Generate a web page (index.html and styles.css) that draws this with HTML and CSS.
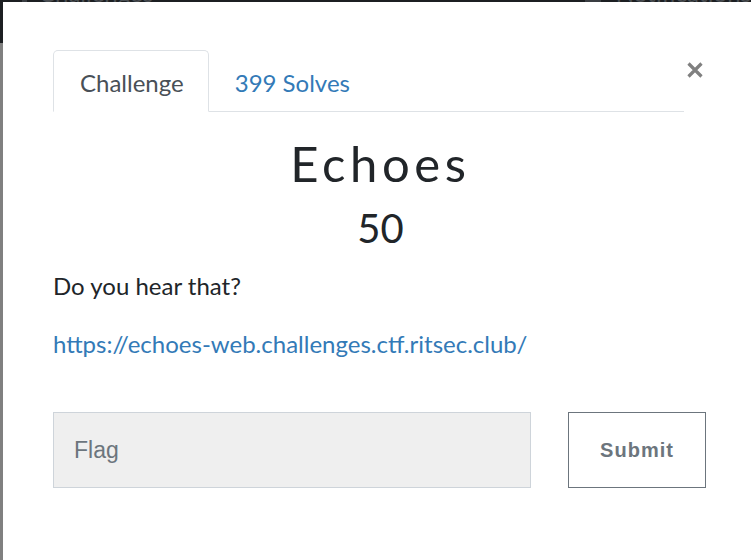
FILE: index.html
```html
<!DOCTYPE html>
<html lang="en">
<head>
<meta charset="utf-8">
<title>Echoes</title>
<link rel="stylesheet" href="styles.css">
</head>
<body>
<header class="backdrop-nav">
  <span class="bn-mark"></span>
  <span class="bn-item bn-left">Challenges</span>
  <span class="bn-icon"></span>
  <span class="bn-item">Notifications</span>
</header>
<div class="modal">
  <div class="modal-body">
    <div class="nav-row">
      <nav class="tabs">
        <a class="tab active">Challenge</a>
        <a class="tab">399 Solves</a>
      </nav>
      <button class="close" aria-label="Close">
        <svg width="16" height="16" viewBox="0 0 16 16"><path d="M1.5 1.5 L14.5 14.5 M14.5 1.5 L1.5 14.5" stroke="#808080" stroke-width="3.2" stroke-linecap="butt"/></svg>
      </button>
    </div>
    <h2 class="challenge-name">Echoes</h2>
    <h3 class="challenge-value">50</h3>
    <p class="desc">Do you hear that?</p>
    <p class="desc link-line"><a href="#">https://echoes-web.challenges.ctf.ritsec.club/</a></p>
    <form class="submit-row">
      <input class="flag-input" type="text" placeholder="Flag">
      <button class="submit-btn" type="button">Submit</button>
    </form>
  </div>
</div>
</body>
</html>
```
FILE: styles.css
```css
html, body {
  margin: 0;
  padding: 0;
}
body {
  background: #808080;
  width: 751px;
  height: 560px;
  overflow: hidden;
  font-family: "Lato", "Open Sans", sans-serif;
}
.backdrop-nav {
  height: 43px;
  background: #1c1f22;
  display: flex;
  align-items: flex-start;
  overflow: hidden;
}
.bn-mark {
  width: 5px;
  height: 14px;
  background: #3a3e42;
  margin: -12px 0 0 22px;
}
.bn-item {
  color: #4a4e52;
  font-size: 24px;
  line-height: 22px;
  margin-top: -18px;
}
.bn-left {
  margin-left: 12px;
  margin-right: auto;
}
.bn-icon {
  width: 16px;
  height: 14px;
  background: #3a3e42;
  margin-top: -12px;
  margin-right: 15px;
}
.modal {
  position: absolute;
  left: 3px;
  top: 2px;
  width: 760px;
  height: 558px;
  background: #fff;
}
.modal-body {
  padding: 48px 0 0 50px;
  width: 655px;
}
.nav-row {
  display: flex;
  align-items: flex-start;
}
.tabs {
  display: flex;
  width: 631px;
  border-bottom: 1px solid #dee2e6;
}
.tab {
  display: block;
  margin-bottom: -1px;
  padding: 18px 25px 14px;
  border: 1px solid transparent;
  border-radius: 5px 5px 0 0;
  font-size: 24px;
  line-height: 28px;
  color: #337ab7;
  text-decoration: none;
}
.tab.active {
  padding-left: 26px;
  padding-right: 24px;
  color: #495057;
  border-color: #dee2e6 #dee2e6 #fff;
  background: #fff;
}
.close {
  margin: 12px 0 0 3px;
  padding: 0;
  border: 0;
  background: none;
  width: 16px;
  height: 16px;
  display: block;
}
.close svg {
  display: block;
}
.challenge-name {
  margin: 22px 0 0;
  text-align: center;
  font-weight: 400;
  font-size: 49px;
  line-height: 59px;
  letter-spacing: 4.6px;
  color: #212529;
}
.challenge-value {
  margin: 11px 0 0;
  text-align: center;
  font-weight: 400;
  font-size: 40px;
  line-height: 48px;
  color: #212529;
}
.desc {
  margin: 19px 0 0;
  font-size: 24px;
  line-height: 29px;
  color: #212529;
}
.desc.link-line {
  margin-top: 29px;
}
.desc a {
  color: #337ab7;
  text-decoration: none;
}
.submit-row {
  display: flex;
  gap: 37px;
  margin-top: 54px;
}
.flag-input {
  box-sizing: border-box;
  width: 478px;
  height: 76px;
  margin: 0;
  padding: 0 20px;
  border: 1px solid #ced4da;
  background: #efefef;
  font-family: "Liberation Sans", Arial, sans-serif;
  font-size: 23px;
  color: #495057;
  outline: none;
}
.flag-input::placeholder {
  color: #6c757d;
}
.submit-btn {
  box-sizing: border-box;
  width: 138px;
  height: 76px;
  margin: 0;
  border: 1px solid #6c757d;
  background: #fff;
  color: #6c757d;
  font-family: "Liberation Sans", Arial, sans-serif;
  font-weight: 700;
  font-size: 20px;
  letter-spacing: 1px;
}
```
